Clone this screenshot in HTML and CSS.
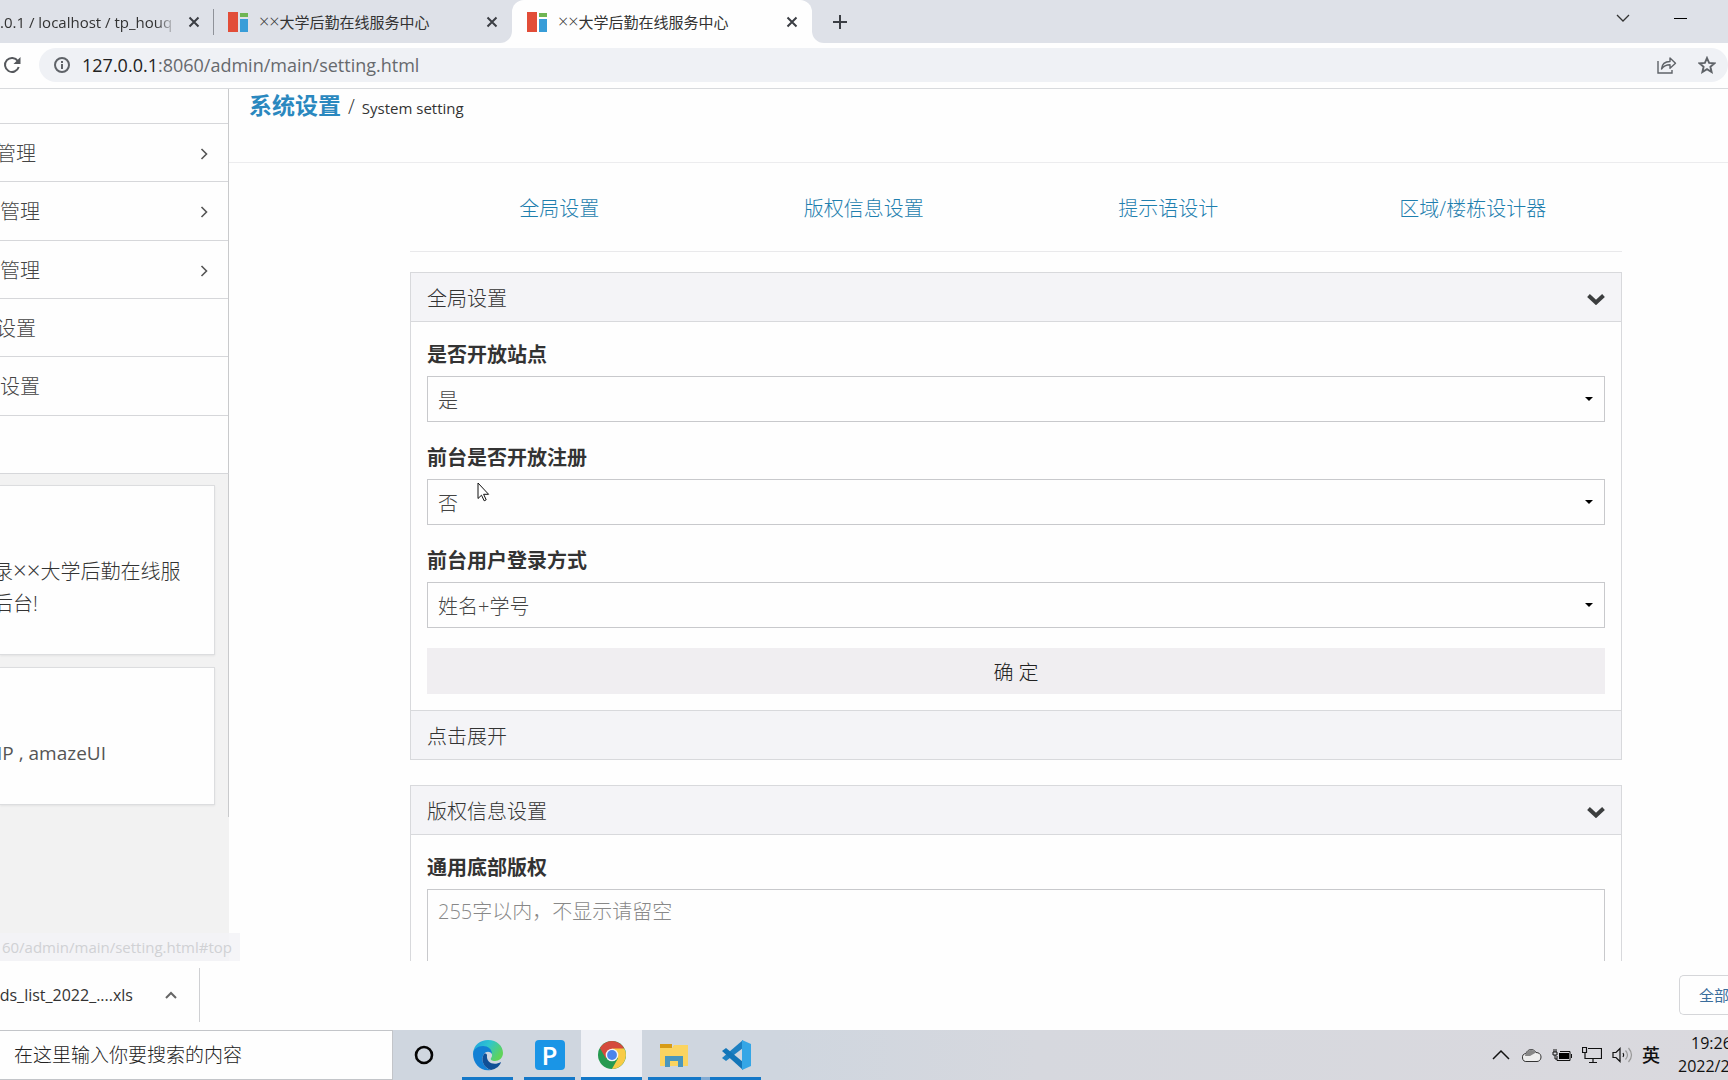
FILE: index.html
```html
<!DOCTYPE html>
<html lang="zh-CN">
<head>
<meta charset="utf-8">
<title>××大学后勤在线服务中心</title>
<link rel="stylesheet" href="styles.css">
</head>
<body>
<svg class="defs" width="0" height="0" aria-hidden="true">
  <symbol id="close" viewBox="0 0 12 12"><path d="M1.5 1.5l9 9m0-9l-9 9" fill="none" stroke="#3b3e44" stroke-width="2"/></symbol>
  <symbol id="favicon" viewBox="0 0 20 20"><path fill="#e24d38" d="M0 0h10v20H0z"/><path fill="#6fb553" d="M12 1h8v4h-8z"/><path fill="#389dd8" d="M12 7h8v13h-8z"/></symbol>
  <symbol id="right" viewBox="0 0 8 12"><path d="M1.5 1l5 5-5 5" fill="none" stroke="#555" stroke-width="1.6"/></symbol>
  <symbol id="down" viewBox="0 0 18 12"><path d="M1.5 2.5L9 9.5l7.500-7" fill="none" stroke="#3c3e3f" stroke-width="4"/></symbol>
  <symbol id="arrow" viewBox="0 0 8 4"><path d="M0 0h8L4 4z" fill="#000"/></symbol>
</svg>

<header class="tabs">
  <div class="tab tab-first">
    <span class="tab-title fade">.0.1 / localhost / tp_houq</span>
    <button class="icon-btn" aria-label="关闭"><svg width="12" height="12"><use href="#close"/></svg></button>
  </div>
  <div class="tab">
    <svg width="20" height="20"><use href="#favicon"/></svg>
    <span class="tab-title"><span class="cross">××</span>大学后勤在线服务中心</span>
    <button class="icon-btn" aria-label="关闭"><svg width="12" height="12"><use href="#close"/></svg></button>
  </div>
  <div class="tab active">
    <svg width="20" height="20"><use href="#favicon"/></svg>
    <span class="tab-title"><span class="cross">××</span>大学后勤在线服务中心</span>
    <button class="icon-btn" aria-label="关闭"><svg width="12" height="12"><use href="#close"/></svg></button>
  </div>
  <button class="icon-btn new-tab" aria-label="新标签页"><svg width="16" height="16" viewBox="0 0 16 16"><path d="M8 1v14M1 8h14" stroke="#3b3e44" stroke-width="2"/></svg></button>
  <div class="window-controls">
    <button class="icon-btn" aria-label="搜索标签页"><svg width="14" height="9" viewBox="0 0 14 9"><path d="M1 1l6 6 6-6" fill="none" stroke="#333" stroke-width="1.300"/></svg></button>
    <button class="icon-btn" aria-label="最小化"><svg width="14" height="9" viewBox="0 0 14 9"><path d="M0 4.500h13" stroke="#000"/></svg></button>
  </div>
</header>

<div class="toolbar">
  <button class="icon-btn reload" aria-label="重新加载"><svg width="18" height="18" viewBox="0 0 18 18"><path d="M14.800 5A7 7 0 1 0 15.700 11" fill="none" stroke="#55585c" stroke-width="2"/><path d="M17.500 1v7h-7z" fill="#55585c"/></svg></button>
  <div class="omnibox">
    <svg width="18" height="18" viewBox="0 0 18 18"><circle cx="9" cy="9" r="7" fill="none" stroke="#5f6368" stroke-width="2"/><path d="M9 8v5M9 5v2" stroke="#5f6368" stroke-width="2"/></svg>
    <span class="url">127.0.0.1<span class="path">:8060/admin/main/setting.html</span></span>
    <button class="icon-btn" aria-label="分享"><svg width="20" height="18" viewBox="0 0 20 18"><path d="M1 5v12h14v-3" fill="none" stroke="#5f6368" stroke-width="1.400"/><path d="M4.500 13C5 8 8 5.500 13 5.500V2l5.500 5.200-5.500 5V8.800c-4 0-6.500 1.200-8.500 4.200z" fill="none" stroke="#5f6368" stroke-width="1.400" stroke-linejoin="round"/></svg></button>
    <button class="icon-btn" aria-label="收藏"><svg width="18" height="18" viewBox="0 0 18 18"><path d="M9 2l2.100 4.900 5.300.4-4 3.500 1.200 5.200L9 13.200 4.400 16l1.200-5.200-4-3.500 5.300-.4z" fill="none" stroke="#5f6368" stroke-width="1.900"/></svg></button>
  </div>
</div>

<div class="viewport">
  <aside class="sidebar">
    <nav class="menu">
      <a href="#top" class="short">管理<svg width="8" height="12"><use href="#right"/></svg></a>
      <a href="#top">管理<svg width="8" height="12"><use href="#right"/></svg></a>
      <a href="#top">管理<svg width="8" height="12"><use href="#right"/></svg></a>
      <a href="#top" class="short">设置</a>
      <a href="#top">设置</a>
      <a href="#top" aria-label="菜单"></a>
    </nav>
    <div class="notes">
      <section class="note"><p>录<span class="cross">××</span>大学后勤在线服</p><p>后台!</p></section>
      <section class="note note-small"><p class="tech">IP , amazeUI</p></section>
    </div>
  </aside>

  <main class="main">
    <h1 class="title"><strong>系统设置</strong> <span>/</span> <small>System setting</small></h1>
    <div class="content">
      <nav class="sections">
        <a href="#global">全局设置</a>
        <a href="#copyright">版权信息设置</a>
        <a href="#tips">提示语设计</a>
        <a href="#area">区域/楼栋设计器</a>
      </nav>

      <form class="panel" id="global">
        <div class="panel-head"><h2>全局设置</h2><svg width="18" height="12"><use href="#down"/></svg></div>
        <div class="panel-body">
          <div class="field">
            <label for="open-site">是否开放站点</label>
            <div class="select"><select id="open-site"><option>是</option><option>否</option></select><svg width="8" height="4"><use href="#arrow"/></svg></div>
          </div>
          <div class="field">
            <label for="open-register">前台是否开放注册</label>
            <div class="select"><select id="open-register"><option>否</option><option>是</option></select><svg width="8" height="4"><use href="#arrow"/></svg></div>
          </div>
          <div class="field">
            <label for="login-mode">前台用户登录方式</label>
            <div class="select"><select id="login-mode"><option>姓名+学号</option></select><svg width="8" height="4"><use href="#arrow"/></svg></div>
          </div>
          <button class="submit" type="button">确 定</button>
        </div>
        <div class="panel-foot">点击展开</div>
      </form>

      <form class="panel" id="copyright">
        <div class="panel-head"><h2>版权信息设置</h2><svg width="18" height="12"><use href="#down"/></svg></div>
        <div class="panel-body">
          <div class="field">
            <label for="footer-text">通用底部版权</label>
            <textarea id="footer-text" rows="5" placeholder="255字以内，不显示请留空"></textarea>
          </div>
        </div>
      </form>
    </div>
  </main>
  <div class="status">60/admin/main/setting.html#top</div>
</div>

<div class="downloads">
  <div class="download"><span>ds_list_2022_....xls</span>
    <button class="icon-btn" aria-label="更多"><svg width="12" height="8" viewBox="0 0 12 8"><path d="M1 7l5-5 5 5" fill="none" stroke="#666" stroke-width="2"/></svg></button>
  </div>
  <button class="show-all">全部</button>
</div>

<footer class="taskbar">
  <input class="search" type="text" placeholder="在这里输入你要搜索的内容" aria-label="搜索">
  <div class="apps">
    <button class="app cortana" aria-label="Cortana"><svg width="20" height="20" viewBox="0 0 20 20"><circle cx="10" cy="10" r="8" fill="none" stroke="#050505" stroke-width="2.600"/></svg></button>
    <button class="app running" aria-label="Edge"><svg width="32" height="32" viewBox="0 0 32 32">
      <defs>
        <linearGradient id="eg" x1="0" y1="0" x2="1" y2=".5"><stop offset="0" stop-color="#1d9de2"/><stop offset=".5" stop-color="#2fc5cf"/><stop offset="1" stop-color="#5fd35a"/></linearGradient>
      </defs>
      <path d="M16 1c9 0 15 6 15 13 0 5-4 8-8 8-3 0-5-1-4-3 2-2 1-5-1-7C13 7 4 8 1 14 2 6 8 1 16 1z" fill="url(#eg)"/>
      <path d="M1 15c0-5 5-8 10-8 5 0 9 3 9 8-2-3-6-3-8 0-4 6 0 14 7 16C9 33 1 25 1 15z" fill="#1380d4"/>
      <path d="M12 15c-4 6 0 14 7 16 5-1 9-4 10-8-7 4-15 1-14-7 0-1-2-2-3-1z" fill="#104f96"/>
    </svg></button>
    <button class="app running" aria-label="P"><span class="p-logo">P</span></button>
    <button class="app running current" aria-label="Chrome"><svg width="28" height="28" viewBox="0 0 28 28">
      <circle cx="14" cy="14" r="14" fill="#269a50"/>
      <path d="M14 14L1.900 7A14 14 0 0 1 26.100 7z" fill="#d54a3c"/><path d="M1.900 7l6 10.400L14 7z" fill="#d54a3c"/>
      <path d="M14 7.500h12.300A14 14 0 0 1 13.900 28l6-10.500z" fill="#f8cb45"/>
      <circle cx="14" cy="14" r="6.300" fill="#f4f5f8"/><circle cx="14" cy="14" r="4.900" fill="#4b84ea"/>
    </svg></button>
    <button class="app running grouped" aria-label="文件资源管理器"><svg width="30" height="26" viewBox="0 0 30 26"><path d="M1 2h12v4H1z" fill="#d79b16"/><path d="M1 6h12l2-3h14v21H1z" fill="#fbd460"/><path d="M6 14h18v11h-5v-6h-8v6H6z" fill="#4a97bd"/></svg></button>
    <button class="app running" aria-label="Visual Studio Code"><svg width="30" height="30" viewBox="0 0 30 30"><path d="M22 8L5 21l-4-3L22 0z" fill="#1d80c2"/><path d="M1 11l4-3 17 14v8z" fill="#1275b8"/><path d="M21 0l9 4v22l-9 4z" fill="#35a6e6"/></svg></button>
  </div>
  <div class="tray">
    <svg class="tray-more" width="18" height="12" viewBox="0 0 18 12"><path d="M1 10l8-8 8 8" fill="none" stroke="#111" stroke-width="1.500"/></svg>
    <svg width="20" height="16" viewBox="0 0 20 16"><path d="M5 14.500a4 4 0 0 1-1-8C5 2.500 11 .5 14 5.500c7 0 6 9 1 9z" fill="#eee" stroke="#333"/><path d="M3 9C4 2.500 11 1 14 5.500L8 9z" fill="#888"/></svg>
    <svg width="20" height="14" viewBox="0 0 20 14"><path d="M8 3.500h10v9H5V8M19.500 6v4M1 4v3h4V4zM2 1v3m2-3v3M3 7v4h2" fill="none" stroke="#111"/><path d="M7 5h10v6H7z" fill="#000"/></svg>
    <svg width="20" height="18" viewBox="0 0 20 18"><path d="M6 2.500h13.500v10H3V6M11 12.500V16M7 16.500h8M.5 1.500h4v5h-4z" fill="none" stroke="#111" stroke-width="1.200"/></svg>
    <svg width="22" height="18" viewBox="0 0 22 18"><path d="M1 6.500h3l4-4v13l-4-4H1zM11 7q1.500 2 0 4" fill="none" stroke="#111" stroke-width="1.200"/><path d="M13.500 4.500q4 4.500 0 9M16.500 2q6 7 0 14" fill="none" stroke="#999" stroke-width="1.200"/></svg>
    <span class="ime">英</span>
    <div class="clock"><span class="time">19:26</span><span>2022/2</span></div>
  </div>
</footer>
<svg class="cursor" width="13" height="20" viewBox="0 0 13 20"><path d="M1 1v15.500l3.500-3.300 2.700 5.600 2-1-2.600-5.500h5z" fill="#fff" stroke="#111"/></svg>
</body>
</html>
```
FILE: styles.css
```css
* { box-sizing: border-box; }

body {
  margin: 0;
  height: 100vh;
  display: flex;
  flex-direction: column;
  overflow: hidden;
  background: #fefefe;
  color: #333;
  font-family: "Open Sans", "Noto Sans CJK SC", sans-serif;
  font-size: 20px;
  font-weight: 300;
  line-height: 32px;
}

h1, h2, p { margin: 0; font-weight: inherit; }
a { color: inherit; text-decoration: none; }
button, input, select, textarea { font: inherit; color: inherit; border-radius: 0; }
svg { flex: none; display: block; }
.defs { position: absolute; }
.icon-btn { display: grid; place-items: center; padding: 0; border: 0; background: none; }
.cross { font-size: 24px; line-height: 1; }

/* Browser tabs */
.tabs { display: flex; height: 43px; background: #fefefe; flex: none; }
.tab {
  display: flex;
  align-items: center;
  gap: 11px;
  width: 298px;
  padding: 0 14px;
  background: #dee1e8;
  border-bottom-right-radius: 12px;
  font-size: 15px;
  font-weight: 400;
}
.tab .cross { font-size: 18px; font-weight: 300; }
.tab-first { width: 214px; padding-left: 0; padding-right: 13px; border-right: 1px solid; border-radius: 0; border-image: linear-gradient(#dee1e8 22%, #8f9299 22% 80%, #dee1e8 80%) 1; }
.tab.active { width: 300px; padding-left: 15px; background: #fefefe; border-radius: 12px 12px 0 0; box-shadow: 0 -12px 0 #dee1e8; }
.tab-title { flex: 1; min-width: 0; white-space: nowrap; overflow: hidden; }
.fade { mask-image: linear-gradient(90deg, #000 88%, transparent); }
.new-tab { width: 55px; background: #dee1e8; border-bottom-left-radius: 12px; }
.window-controls { flex: 1; display: flex; justify-content: flex-end; gap: 44px; padding: 0 40px 6px 0; background: #dee1e8; }

/* Address bar */
.toolbar { display: flex; align-items: center; gap: 18px; height: 46px; padding: 0 0 1px 3px; border-bottom: 1px solid #d8dadd; flex: none; }
.omnibox { flex: 1; display: flex; align-items: center; gap: 21px; height: 34px; padding: 0 12px 0 14px; border-radius: 17px; background: #eff1f5; }
.url { flex: 1; margin-left: -10px; font-size: 18px; font-weight: 400; color: #222; }
.path { color: #66696d; }

/* Page */
.viewport { position: relative; flex: 1; min-height: 0; display: flex; overflow: hidden; }
.sidebar { width: 229px; flex: none; background: #f2f2f2; }
.menu { display: grid; grid-auto-rows: 1fr; height: 384px; padding-top: 34px; background: #fefefe; border-right: 1px solid #c9cacc; }
.menu a { display: flex; align-items: center; justify-content: space-between; padding: 3px 20px 0 0; border-top: 1px solid #d6d7da; color: #444; }
.menu .short { text-indent: -4px; }
.notes { display: flex; flex-direction: column; gap: 12px; height: 344px; padding: 11px 13px 0 0; border-top: 1px solid #d6d7da; border-right: 1px solid #c9cacc; }
.note { height: 170px; padding: 70px 0 0; background: #fefefe; border: 1px solid #dcdddf; border-left: 0; white-space: nowrap; box-shadow: 0 1px 2px #0001; }
.note p { margin-left: -7px; }
.note-small { height: 138px; padding-top: 69px; }
.note .tech { margin-left: -3px; font-size: 19px; font-weight: 400; color: #555; }

.main { flex: 1; min-width: 0; }
.title { display: flex; align-items: baseline; gap: 7px; height: 74px; padding-left: 20px; border-bottom: 1px solid #ececee; font-size: 20px; }
.title strong { font-size: 23px; font-weight: 700; color: #2a88bf; }
.title small { font-size: 15px; font-weight: 400; }
.content { margin: 0 106px 0 181px; }
.sections { display: grid; grid-template-columns: repeat(4, 1fr); column-gap: 6px; height: 89px; margin-bottom: 20px; padding-top: 30px; border-bottom: 1px solid #e9e9eb; text-align: center; color: #1f7fae; }

.panel { margin-bottom: 25px; border: 1px solid #d8d9dc; }
.panel-head, .panel-foot { display: flex; align-items: center; justify-content: space-between; height: 49px; padding: 3px 16px 0; background: #f4f4f7; }
.panel-head { border-bottom: 1px solid #d8d9dc; }
.panel-foot { border-top: 1px solid #d8d9dc; }
.panel h2 { font-size: 20px; }
.panel-body { display: flex; flex-direction: column; gap: 19px; padding: 16px; }
.field { display: flex; flex-direction: column; gap: 4px; }
.field label { font-weight: 700; line-height: 34px; }
.select { display: grid; align-items: center; }
.select > * { grid-area: 1 / 1; }
.select svg { justify-self: end; margin-right: 12px; }
.select select { width: 100%; height: 46px; padding: 3px 10px 0; border: 1px solid #c8c9cc; background: #fefefe; appearance: none; color: #444; }
.field textarea { height: 150px; padding: 6px 10px; border: 1px solid #c8c9cc; background: #fefefe; resize: none; }
.field textarea::placeholder { color: #888; }
.submit { height: 46px; margin-top: 1px; padding: 3px 0 0; border: 0; background: #f0eef1; color: #222; }

.status { position: absolute; left: 0; bottom: 0; width: 240px; height: 28px; overflow: hidden; padding-right: 8px; display: flex; justify-content: flex-end; background: #f2f3f6cc; color: #d0d1d4; font-size: 15px; font-weight: 400; line-height: 28px; }

/* Download shelf */
.downloads { display: flex; align-items: center; justify-content: space-between; height: 69px; padding-bottom: 1px; overflow: hidden; flex: none; }
.download { display: flex; align-items: center; justify-content: flex-end; gap: 32px; width: 200px; height: 54px; padding-right: 22px; border-right: 1px solid #cfd0d3; font-size: 16px; font-weight: 400; }
.show-all { width: 49px; height: 40px; padding: 0 0 0 19px; overflow: hidden; white-space: nowrap; text-align: left; border: 1px solid #d5d6d9; border-right: 0; border-radius: 5px 0 0 5px; background: #fefefe; color: #3a6d9c; font-size: 15px; font-weight: 400; }

/* Taskbar */
.taskbar { display: flex; height: 50px; flex: none; background: linear-gradient(90deg, #cfd6df 0, #cfd6df 45%, #d6d8de 60%, #dad9de); }
.search { width: 393px; padding: 0 14px; border: 1px solid #c3c5c9; border-left: 0; background: #fefefe; font-size: 19px; }
.search::placeholder { color: #222; opacity: 1; }
.apps { display: flex; }
.app { display: grid; place-items: center; width: 51px; margin: 0 6px 0 5px; padding: 0; border: 0; border-bottom: 3px solid transparent; background: none; }
.app svg, .p-logo { margin-top: 3px; }
.running { border-bottom-color: #1478c8; }
.current { width: 61px; margin: 0; background: #eff1f6; }
.cortana { margin-right: 8px; }
.grouped { width: 62px; margin: 0 0 0 6px; padding-right: 11px; border-image: linear-gradient(90deg, #1478c8 82%, #82acd4 82%) 3; }
.grouped + .app { margin-left: 0; }
.p-logo { width: 30px; height: 30px; border-radius: 4px; background: #1a95e6; color: #fff; font: 600 26px/30px "Open Sans", sans-serif; }
.tray { margin-left: auto; display: flex; align-items: center; gap: 10px; color: #111; }
.tray-more { margin-right: 2px; }
.ime { margin-left: -2px; font-weight: 500; font-size: 18px; }
.clock { display: flex; flex-direction: column; width: 50px; margin-left: 8px; overflow: hidden; font-size: 16px; font-weight: 400; line-height: 23px; }
.time { padding-left: 13px; }

.cursor { position: absolute; left: 477px; top: 482px; }
```
